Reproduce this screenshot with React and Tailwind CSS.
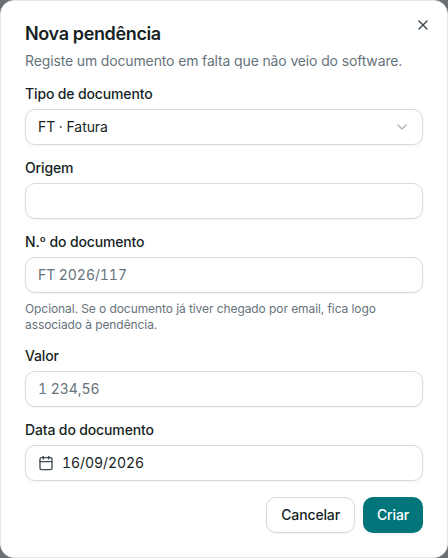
import { X, ChevronDown, Calendar } from "lucide-react";

const font = { fontFamily: "Inter, sans-serif" };

function Field({ label, children }) {
  return (
    <div className="flex flex-col gap-2">
      <label className="text-sm leading-none font-medium tracking-[-0.01em] text-[#161f24]">{label}</label>
      {children}
    </div>
  );
}

function Box({ children, className = "" }) {
  return (
    <div className={"flex h-9 items-center rounded-[10px] border border-[#d3dae1] bg-white px-3 text-sm tracking-[-0.005em] tabular-nums shadow-xs " + className}>
      {children}
    </div>
  );
}

export default function App() {
  return (
    <div className="h-[558px] w-[448px] overflow-hidden bg-[#6b6f72]" style={font}>
      <div className="relative flex h-[558px] w-[448px] flex-col gap-4 rounded-[14px] border border-[#e3e8ec] bg-white p-6">
        <button className="absolute top-4 right-4 text-[#3f4a52]">
          <X size={16} />
        </button>
        <div className="flex flex-col gap-2">
          <h2 className="text-lg leading-none font-semibold tracking-[-0.02em] text-[#161f24]">Nova pendência</h2>
          <p className="text-sm leading-[20px] tracking-[-0.01em] text-[#66737c]">Registe um documento em falta que não veio do software.</p>
        </div>
        <Field label="Tipo de documento">
          <Box className="justify-between text-[#161f24]">
            <span>FT · Fatura</span>
            <ChevronDown size={16} className="text-[#a9b2b9]" />
          </Box>
        </Field>
        <Field label="Origem">
          <Box />
        </Field>
        <Field label="N.º do documento">
          <Box className="text-[#66737c]">FT 2026/117</Box>
          <p className="text-xs leading-[16px] tracking-[-0.08px] text-[#66737c]">
            Opcional. Se o documento já tiver chegado por email, fica logo associado à pendência.
          </p>
        </Field>
        <Field label="Valor">
          <Box className="text-[#66737c]">1 234,56</Box>
        </Field>
        <Field label="Data do documento">
          <Box className="gap-2 text-[#161f24]">
            <Calendar size={16} className="text-[#3f4a52]" />
            <span>16/09/2026</span>
          </Box>
        </Field>
        <div className="flex justify-end gap-2">
          <button className="h-9 rounded-[10px] border border-[#d3dae1] bg-white px-[14px] text-sm font-medium tracking-[-0.01em] text-[#161f24] shadow-xs">Cancelar</button>
          <button className="h-9 rounded-[10px] bg-[#00767a] px-[14px] text-sm font-medium tracking-[-0.01em] text-white shadow-xs">Criar</button>
        </div>
      </div>
    </div>
  );
}
